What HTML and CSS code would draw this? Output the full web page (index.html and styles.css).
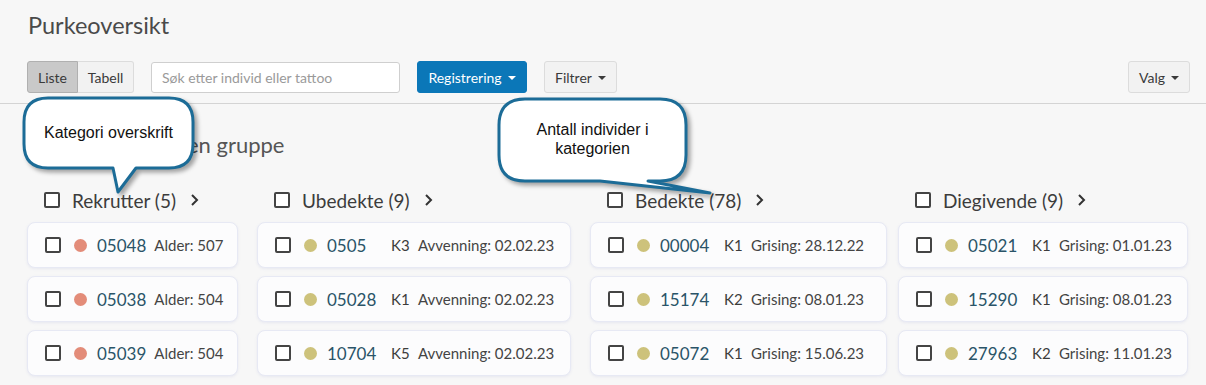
FILE: index.html
```html
<!DOCTYPE html>
<html lang="no">
<head>
    <meta charset="UTF-8">
    <title>Purkeoversikt</title>
    <link rel="stylesheet" href="styles.css">
</head>
<body>
    <div class="page-header">
        <h1 class="page-title">Purkeoversikt</h1>
        <div class="toolbar">
            <div class="btn-group">
                <button class="btn active">Liste</button>
                <button class="btn">Tabell</button>
            </div>
            <input class="search" type="text" placeholder="Søk etter individ eller tattoo">
            <button class="btn primary">Registrering <span class="caret"></span></button>
            <button class="btn">Filtrer <span class="caret"></span></button>
            <button class="btn valg">Valg <span class="caret"></span></button>
        </div>
    </div>

    <div class="board">
        <h2 class="group-title">i en gruppe</h2>

        <div class="columns">
            <div class="column col-1">
                <div class="col-head">
                    <span class="check"></span>
                    <span class="col-name">Rekrutter (5)</span>
                    <svg class="chevron" viewBox="0 0 10 14" width="10" height="14"><path d="M2 2 L7 7 L2 12" /></svg>
                </div>
                <div class="card plain"><span class="check"></span><span class="dot red"></span><span class="id">05048</span><span class="info">Alder: 507</span></div>
                <div class="card plain"><span class="check"></span><span class="dot red"></span><span class="id">05038</span><span class="info">Alder: 504</span></div>
                <div class="card plain"><span class="check"></span><span class="dot red"></span><span class="id">05039</span><span class="info">Alder: 504</span></div>
            </div>

            <div class="column col-2">
                <div class="col-head">
                    <span class="check"></span>
                    <span class="col-name">Ubedekte (9)</span>
                    <svg class="chevron" viewBox="0 0 10 14" width="10" height="14"><path d="M2 2 L7 7 L2 12" /></svg>
                </div>
                <div class="card"><span class="check"></span><span class="dot"></span><span class="id">0505</span><span class="k">K3</span><span class="info">Avvenning: 02.02.23</span></div>
                <div class="card"><span class="check"></span><span class="dot"></span><span class="id">05028</span><span class="k">K1</span><span class="info">Avvenning: 02.02.23</span></div>
                <div class="card"><span class="check"></span><span class="dot"></span><span class="id">10704</span><span class="k">K5</span><span class="info">Avvenning: 02.02.23</span></div>
            </div>

            <div class="column col-3">
                <div class="col-head">
                    <span class="check"></span>
                    <span class="col-name">Bedekte (78)</span>
                    <svg class="chevron" viewBox="0 0 10 14" width="10" height="14"><path d="M2 2 L7 7 L2 12" /></svg>
                </div>
                <div class="card"><span class="check"></span><span class="dot"></span><span class="id">00004</span><span class="k">K1</span><span class="info">Grising: 28.12.22</span></div>
                <div class="card"><span class="check"></span><span class="dot"></span><span class="id">15174</span><span class="k">K2</span><span class="info">Grising: 08.01.23</span></div>
                <div class="card"><span class="check"></span><span class="dot"></span><span class="id">05072</span><span class="k">K1</span><span class="info">Grising: 15.06.23</span></div>
            </div>

            <div class="column col-4">
                <div class="col-head">
                    <span class="check"></span>
                    <span class="col-name">Diegivende (9)</span>
                    <svg class="chevron" viewBox="0 0 10 14" width="10" height="14"><path d="M2 2 L7 7 L2 12" /></svg>
                </div>
                <div class="card"><span class="check"></span><span class="dot"></span><span class="id">05021</span><span class="k">K1</span><span class="info">Grising: 01.01.23</span></div>
                <div class="card"><span class="check"></span><span class="dot"></span><span class="id">15290</span><span class="k">K1</span><span class="info">Grising: 08.01.23</span></div>
                <div class="card"><span class="check"></span><span class="dot"></span><span class="id">27963</span><span class="k">K2</span><span class="info">Grising: 11.01.23</span></div>
            </div>
        </div>
    </div>

    <!-- callouts over the page -->
    <svg class="callouts" width="1206" height="385" viewBox="0 0 1206 385">
        <path d="M48 98 H169 Q193 98 193 122 V144 Q193 168 169 168 H136 L118 192 L113 168 H48 Q24 168 24 144 V122 Q24 98 48 98 Z" />
        <path d="M525 99 H660 Q686 99 686 125 V155 Q686 181 660 181 H648 L710 193 L600 181 H525 Q499 181 499 155 V125 Q499 99 525 99 Z" />
    </svg>
    <div class="callout-text first">Kategori overskrift</div>
    <div class="callout-text second">Antall individer i<br>kategorien</div>
</body>
</html>
```

FILE: styles.css
```css
* {
    margin: 0;
    padding: 0;
    box-sizing: border-box;
    font-family: Lato, 'Noto Sans', sans-serif;
}

body {
    background: #f7f7f7;
    color: #333;
    width: 1206px;
    height: 385px;
    overflow: hidden;
    position: relative;
}

.page-header {
    padding: 11px 16px 10px 27px;
    border-bottom: 1px solid #d4d4d4;
}

.page-title {
    font-size: 23.5px;
    line-height: 28px;
    font-weight: 400;
    color: #4a4a4a;
    margin-bottom: 22px;
    padding-left: 1px;
}

.toolbar {
    display: flex;
    align-items: center;
    height: 32px;
}

.btn-group {
    display: flex;
    margin-right: 17px;
}

.btn {
    height: 32px;
    padding: 0 10px;
    font-size: 14px;
    color: #3a3a3a;
    background: #f2f2f2;
    border: 1px solid #dcdcdc;
    border-radius: 3px;
    display: flex;
    align-items: center;
    gap: 6px;
}

.btn-group .btn {
    border-radius: 0;
}

.btn-group .btn:first-child {
    border-radius: 3px 0 0 3px;
    width: 51px;
    justify-content: center;
}

.btn-group .btn:last-child {
    border-radius: 0 3px 3px 0;
    border-left: none;
    width: 56px;
    justify-content: center;
}

.btn.active {
    background: #c9c9c9;
    border-color: #b0b0b0;
}

.btn.primary {
    background: #0b77b8;
    border-color: #0b77b8;
    color: #fff;
    width: 110px;
    justify-content: center;
    margin-right: 17px;
}

.caret {
    width: 0;
    height: 0;
    border-left: 4px solid transparent;
    border-right: 4px solid transparent;
    border-top: 4px solid currentColor;
    margin-top: 1px;
}

.search {
    width: 249px;
    height: 31px;
    border: 1px solid #cfcfcf;
    border-radius: 3px;
    background: #fff;
    padding: 0 10px;
    font-size: 14px;
    margin-right: 17px;
}

.search::placeholder {
    color: #9a9a9a;
}

.btn.valg {
    margin-left: auto;
    width: 62px;
    justify-content: center;
}

.board {
    padding: 28px 0 0 27px;
}

.group-title {
    font-size: 22px;
    line-height: 26px;
    font-weight: 400;
    color: #555;
    margin-bottom: 30px;
    padding-left: 149px;
}

.columns {
    display: flex;
    gap: 19px;
}

.col-1 { width: 211px; }
.col-2 { width: 314px; }
.col-3 { width: 297px; }
.col-4 { width: 290px; margin-left: -8px; }

.col-head {
    display: flex;
    align-items: center;
    height: 24px;
    padding-left: 17px;
    margin-bottom: 10px;
}

.col-name {
    font-size: 19px;
    color: #3c3c3c;
    margin-left: 12px;
    margin-right: 14px;
}

.chevron {
    fill: none;
    stroke: #333;
    stroke-width: 2;
}

.check {
    width: 16px;
    height: 16px;
    border: 2px solid #444;
    border-radius: 2px;
    background: #fff;
    flex: none;
}

.card {
    display: flex;
    align-items: center;
    height: 46px;
    margin-bottom: 8px;
    padding-left: 17px;
    background: #fcfcfd;
    border: 1px solid #e7e9f4;
    border-radius: 8px;
    box-shadow: 0 1px 3px rgba(120, 130, 200, 0.12);
}

.dot {
    width: 13px;
    height: 13px;
    border-radius: 50%;
    background: #cdc27b;
    margin-left: 13px;
    flex: none;
}

.dot.red {
    background: #e38c79;
}

.id {
    font-size: 17px;
    color: #2a5468;
    margin-left: 10px;
    width: 64px;
}

.card.plain .id {
    width: auto;
    margin-right: 8px;
}

.k {
    font-size: 15px;
    color: #3c3c3c;
    width: 27px;
}

.info {
    font-size: 15px;
    color: #444;
}

.callouts {
    position: absolute;
    left: 0;
    top: 0;
    pointer-events: none;
}

.callouts path {
    fill: #fff;
    stroke: #1c6c97;
    stroke-width: 3;
    stroke-linejoin: round;
    filter: drop-shadow(3px 3px 2px rgba(0, 0, 0, 0.35));
}

.callout-text {
    position: absolute;
    font-family: 'Liberation Sans', Arial, sans-serif;
    font-size: 16px;
    line-height: 19px;
    color: #111;
}

.callout-text.first {
    left: 44px;
    top: 123px;
}

.callout-text.second {
    left: 499px;
    width: 187px;
    top: 120px;
    text-align: center;
}
```
